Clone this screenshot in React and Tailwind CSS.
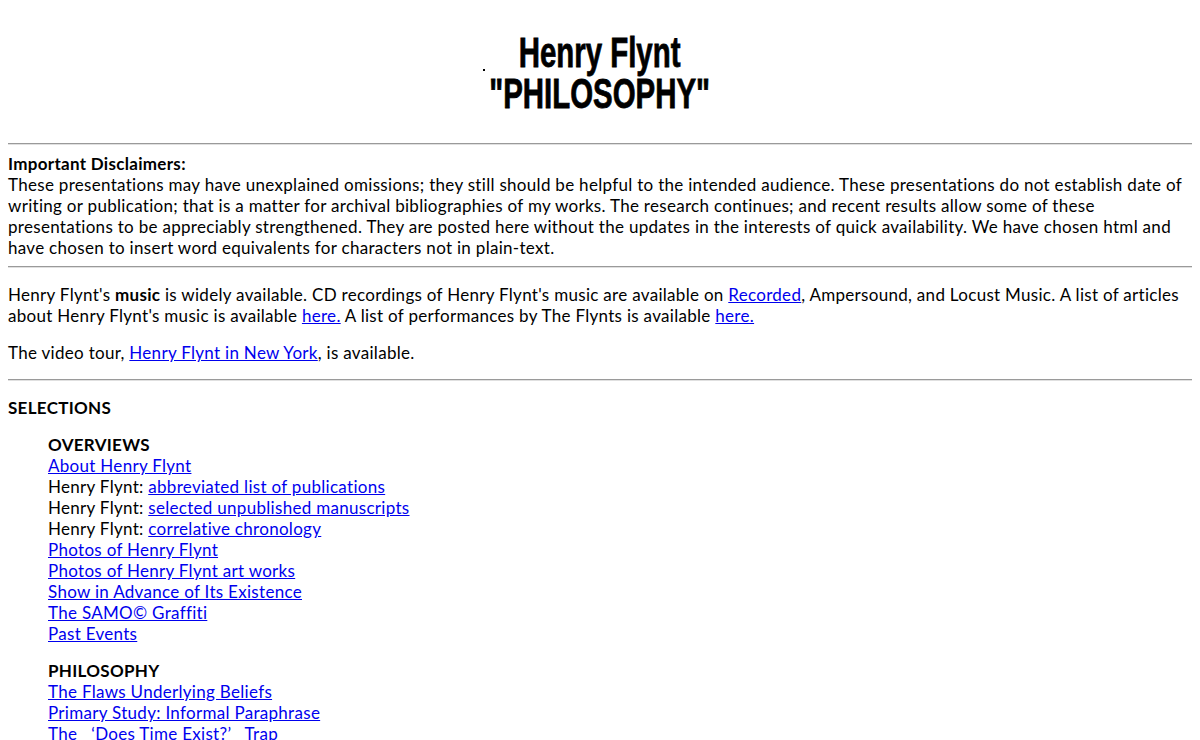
import React from 'react';

const link = 'text-[#0000ee] underline';

function Rule() {
  return <div className="border-t border-t-[#9a9a9a] border-b border-b-[#e0e0e0] h-[2px] my-2" />;
}

export default function App() {
  const overviews = [
    { text: 'About Henry Flynt' },
    { pre: 'Henry Flynt: ', text: 'abbreviated list of publications' },
    { pre: 'Henry Flynt: ', text: 'selected unpublished manuscripts' },
    { pre: 'Henry Flynt: ', text: 'correlative chronology' },
    { text: 'Photos of Henry Flynt' },
    { text: 'Photos of Henry Flynt art works' },
    { text: 'Show in Advance of Its Existence' },
    { text: 'The SAMO\u00a9 Graffiti' },
    { text: 'Past Events' },
  ];
  const philosophy = [
    'The Flaws Underlying Beliefs',
    'Primary Study: Informal Paraphrase',
    'The \u00a0\u00a0\u2018Does Time Exist?\u2019 \u00a0\u00a0Trap',
  ];

  return (
    <div className="relative bg-white text-black px-2 pt-[32px] text-[17px] tracking-[0.3px] leading-[21px] font-['Lato','Noto_Sans',sans-serif]">
      {/* Title graphic */}
      <div className="flex flex-col items-center h-[103px]">
        <div className="font-['Liberation_Sans',sans-serif] font-black text-center leading-[41px] text-[42px] tracking-normal scale-x-[0.7] [-webkit-text-stroke:0.8px_black]">
          <div>Henry Flynt</div>
          <div>"PHILOSOPHY"</div>
        </div>
      </div>
      <span className="absolute left-[483px] top-[69px] w-[2px] h-[2px] bg-black" />

      <Rule />

      <div>
        <b>Important Disclaimers:</b>
        <br />
        These presentations may have unexplained omissions; they still should be helpful to the intended
        audience. These presentations do not establish date of writing or publication; that is a matter for
        archival bibliographies of my works. The research continues; and recent results allow some of these
        presentations to be appreciably strengthened. They are posted here without the updates in the interests
        of quick availability. We have chosen html and have chosen to insert word equivalents for characters not
        in plain-text.
      </div>

      <Rule />

      <p className="my-4">
        Henry Flynt's <b>music</b> is widely available. CD recordings of Henry Flynt's music are available on{' '}
        <a className={link}>Recorded</a>, Ampersound, and Locust Music. A list of articles about Henry Flynt's
        music is available <a className={link}>here.</a> A list of performances by The Flynts is available{' '}
        <a className={link}>here.</a>
      </p>
      <p className="my-4">
        The video tour, <a className={link}>Henry Flynt in New York</a>, is available.
      </p>

      <Rule />

      <p className="mt-4 font-bold">SELECTIONS</p>

      <div className="pl-10 mt-4">
        <div className="font-bold">OVERVIEWS</div>
        {overviews.map((item, i) => (
          <div key={i}>
            {item.pre}
            <a className={link}>{item.text}</a>
          </div>
        ))}

        <div className="font-bold mt-4">PHILOSOPHY</div>
        {philosophy.map((t, i) => (
          <div key={i}>
            <a className={link}>{t}</a>
          </div>
        ))}
        <div className="h-10" />
      </div>
    </div>
  );
}
